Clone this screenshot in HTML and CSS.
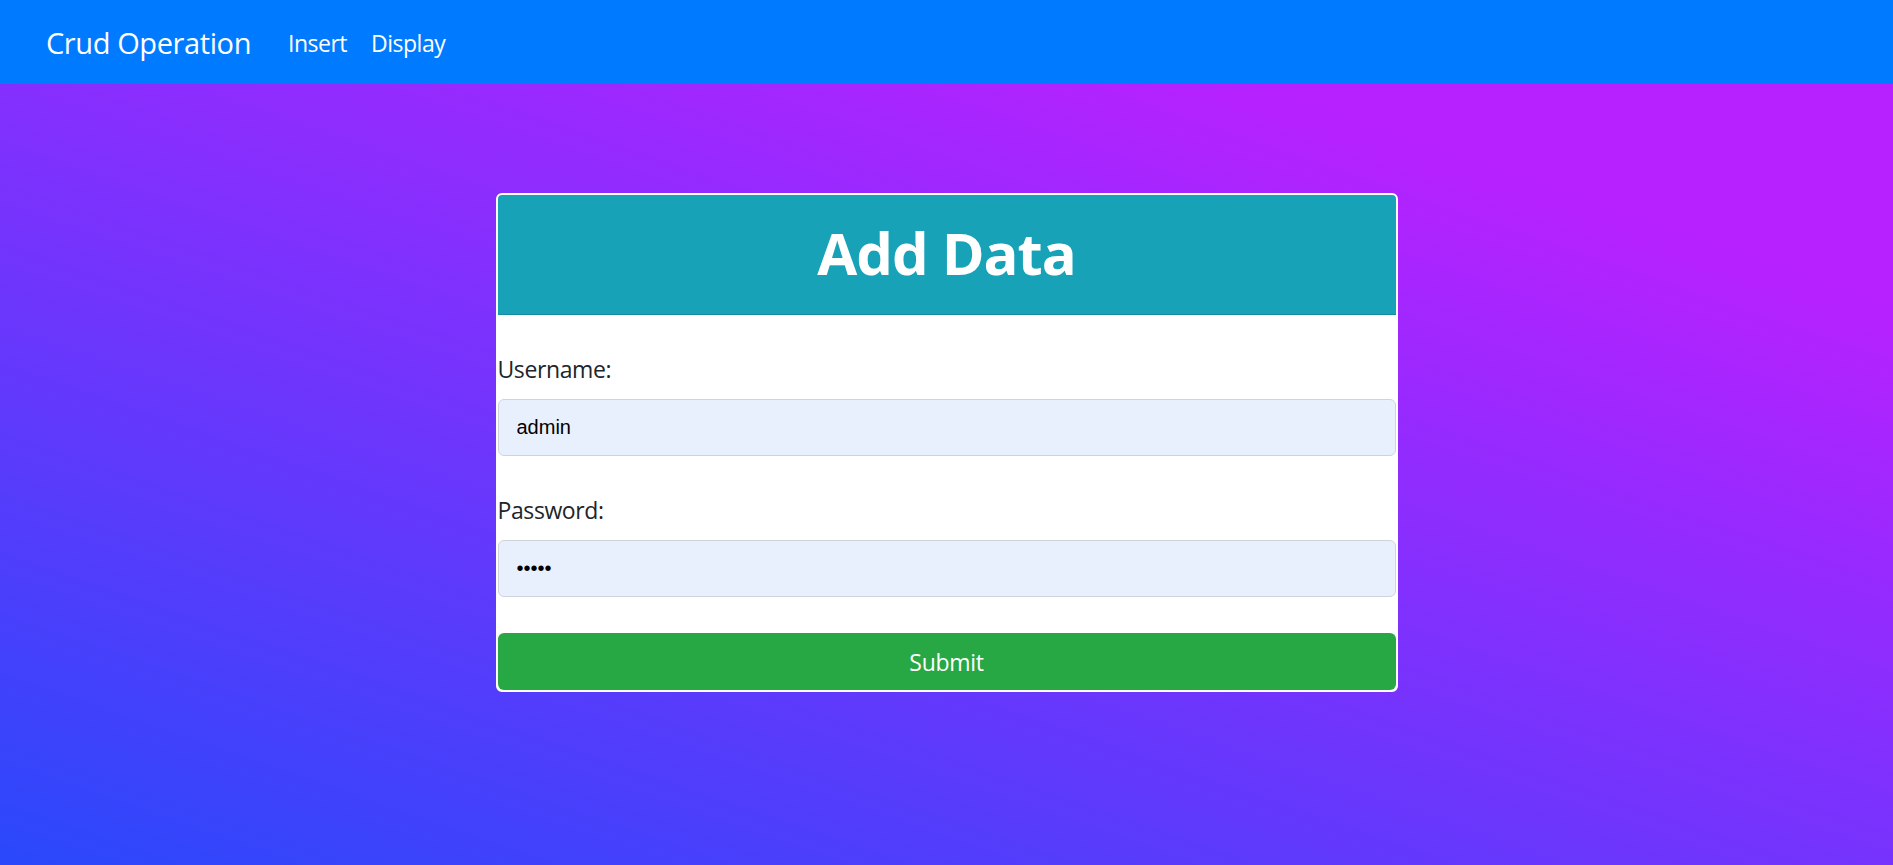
FILE: index.html
```html
<!DOCTYPE html>
<html lang="en">
<head>
<meta charset="utf-8">
<title>Crud Operation</title>
<link rel="stylesheet" href="styles.css">
</head>
<body>
<nav class="navbar">
  <div class="nav-inner">
    <a class="brand" href="#">Crud Operation</a>
    <ul class="nav-links">
      <li><a href="#">Insert</a></li>
      <li><a href="#">Display</a></li>
    </ul>
  </div>
</nav>
<main class="page">
  <div class="card">
    <div class="card-header">
      <h1 class="title">Add Data</h1>
    </div>
    <form class="card-body">
      <div class="form-group">
        <label class="label" for="user">Username:</label>
        <input class="control" id="user" type="text" value="admin">
      </div>
      <div class="form-group">
        <label class="label" for="pass">Password:</label>
        <input class="control" id="pass" type="password" value="admin">
      </div>
      <button class="btn-submit" type="button">Submit</button>
    </form>
  </div>
</main>
</body>
</html>
```

FILE: styles.css
```css
* { box-sizing: border-box; }
html, body { margin: 0; padding: 0; }
body {
  min-height: 865px;
  font-family: "Open Sans", "Noto Sans", sans-serif;
  color: #212529;
  background: linear-gradient(19deg, #2a48fa 0%, #b721ff 80%);
  background-attachment: fixed;
}
.navbar {
  background: #007bff;
  height: 84px;
  padding: 0 46px;
  display: flex;
  align-items: center;
}
.nav-inner { display: flex; align-items: center; }
.brand {
  color: #fff;
  text-decoration: none;
  font-size: 29px;
  letter-spacing: -0.4px;
  margin-right: 25px;
}
.nav-links {
  display: flex;
  list-style: none;
  margin: 0;
  padding: 0;
}
.nav-links a {
  display: block;
  color: #fff;
  text-decoration: none;
  font-size: 23px;
  letter-spacing: -0.5px;
  padding: 0 12px;
  margin-top: 2px;
}
.page { padding-top: 109px; }
.card {
  width: 902px;
  margin: 0 auto;
  border: 2px solid #fff;
  border-radius: 6px;
  background: #fff;
  overflow: hidden;
}
.card-header {
  background: #17a2b8;
  height: 120px;
  border-bottom: 1.5px solid rgba(0,0,0,.125);
  display: flex;
  align-items: center;
  justify-content: center;
}
.title {
  margin: 0 0 4px;
  color: #fff;
  font-size: 58px;
  font-weight: 700;
  letter-spacing: -1px;
  line-height: 1;
}
.card-body {
  padding-top: 36px;
  margin: 0;
}
.form-group { margin-bottom: 36px; }
.label {
  display: block;
  font-size: 23px;
  line-height: 36px;
  letter-spacing: -0.4px;
  margin-bottom: 12px;
  color: #212529;
}
.control {
  display: block;
  width: 100%;
  height: 57px;
  padding: 0 18px;
  border: 1.5px solid #ced4da;
  border-radius: 6px;
  background: #e8f0fe;
  font-family: "Liberation Sans", Arial, sans-serif;
  font-size: 20px;
  color: #000;
  outline: none;
}
.btn-submit {
  display: block;
  width: 100%;
  height: 57px;
  border: 0;
  border-radius: 6px;
  background: #28a745;
  color: #fff;
  font-family: "Open Sans", "Noto Sans", sans-serif;
  font-size: 23px;
  letter-spacing: -0.3px;
  cursor: pointer;
}
```
